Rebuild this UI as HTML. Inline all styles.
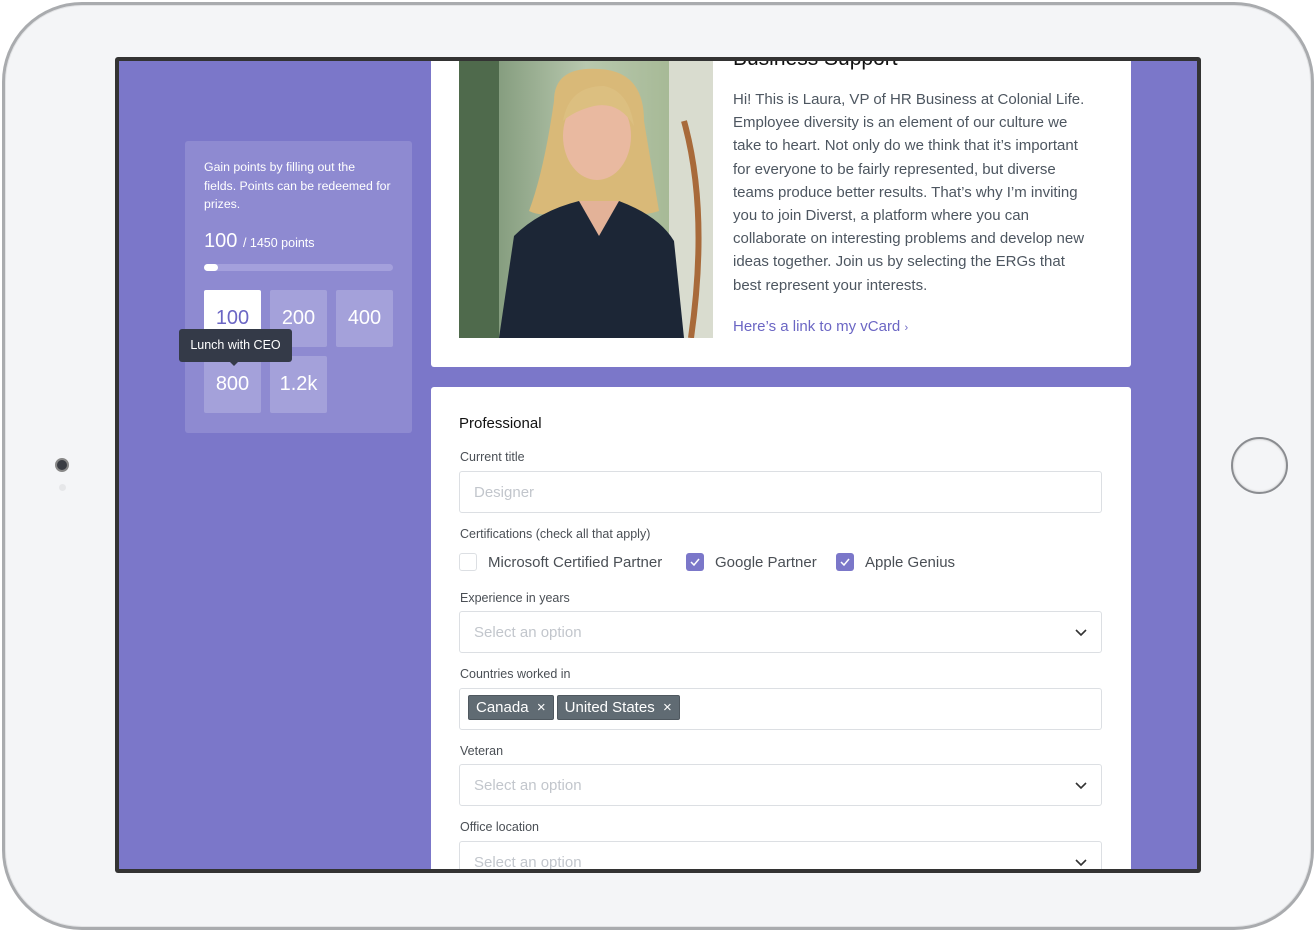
<!DOCTYPE html>
<html><head><meta charset="utf-8"><style>
*{box-sizing:border-box;margin:0;padding:0}
body{width:1316px;height:933px;background:#fff;position:relative;overflow:hidden;font-family:"Liberation Sans",Arial,sans-serif}
.dev{position:absolute;left:2px;top:2px;width:1312px;height:928px;border-radius:80px;background:#f4f5f7;border:3px solid #a9abae;box-shadow:inset 0 0 0 1px #e2e3e5}
.bezel{position:absolute;left:115px;top:57px;width:1086px;height:816px;background:#333;border-radius:3px}
.scr{position:absolute;left:119px;top:61px;width:1078px;height:808px;background:#7b77c9;overflow:hidden}
.a{position:absolute}
.card{position:absolute;background:#fff;border-radius:3px}
.lbl{position:absolute;font-size:12.5px;color:#4a4f55}
.inp{position:absolute;left:28px;width:643px;height:42px;border:1px solid #dcdfe3;border-radius:3px;font-size:15px;color:#c2c6cc;padding:12px 14px}
.chev{position:absolute;right:14px;top:14px}
.box{position:absolute;width:57px;height:57px;background:rgba(255,255,255,.2);border-radius:2px;color:#fff;font-size:20px;text-align:center;line-height:57px}
.tag{display:inline-block;background:#606b73;color:#fff;font-size:15px;padding:3px 7px;border:1px solid #4f585f;border-radius:2px;margin-right:3px}
.cb{position:absolute;width:18px;height:18px;border-radius:3px}
.cbt{position:absolute;font-size:15px;color:#4a4f55}
</style></head><body>
<div class="dev"></div>
<div class="a" style="left:55px;top:458px;width:14px;height:14px;border-radius:50%;background:#3a3d44;border:2px solid #888"></div>
<div class="a" style="left:59px;top:484px;width:7px;height:7px;border-radius:50%;background:#e6e7e9"></div>
<div class="a" style="left:1231px;top:437px;width:57px;height:57px;border-radius:50%;border:2px solid #8a8c90;box-shadow:inset 0 0 2px #bbb"></div>
<div class="bezel"></div>
<div class="scr">
  <div class="a" style="left:66px;top:80px;width:227px;height:292px;background:#8e8ad1;border-radius:3px"></div>
  <div class="a" style="left:85px;top:97px;width:192px;font-size:12.3px;line-height:18.5px;color:#fff">Gain points by filling out the<br>fields. Points can be redeemed for prizes.</div>
  <div class="a" style="left:85px;top:169px;color:#fff;font-size:20px">100 <span style="font-size:12.5px">/ 1450 points</span></div>
  <div class="a" style="left:85px;top:203px;width:189px;height:7px;border-radius:4px;background:#a4a0dc"></div>
  <div class="a" style="left:85px;top:203px;width:14px;height:7px;border-radius:4px;background:#fff"></div>
  <div class="box" style="left:85px;top:229px;background:#fff;color:#6b66c4">100</div>
  <div class="box" style="left:151px;top:229px">200</div>
  <div class="box" style="left:217px;top:229px">400</div>
  <div class="box" style="left:85px;top:295px">800</div>
  <div class="box" style="left:151px;top:295px">1.2k</div>
  <div class="a" style="left:60px;top:268px;width:113px;height:33px;background:#343a48;border-radius:3px;color:#fff;font-size:12.5px;line-height:33px;text-align:center">Lunch with CEO</div>
  <div class="a" style="left:111px;top:301px;width:0;height:0;border-left:4px solid transparent;border-right:4px solid transparent;border-top:4px solid #343a48"></div>

  <div class="card" style="left:312px;top:-20px;width:700px;height:326px">
    <svg class="a" style="left:28px;top:20px" width="254" height="277" viewBox="0 0 254 277">
      <defs><linearGradient id="bg" x1="0" x2="1"><stop offset="0" stop-color="#6f8a6a"/><stop offset=".5" stop-color="#b8c8ae"/><stop offset="1" stop-color="#9eb28a"/></linearGradient></defs>
      <rect width="254" height="277" fill="url(#bg)"/>
      <rect x="0" y="0" width="40" height="277" fill="#4f6a4c"/>
      <rect x="210" y="0" width="44" height="277" fill="#d9dccf"/>
      <path d="M225 60 Q250 150 232 277" stroke="#a86a3a" stroke-width="6" fill="none"/>
      <path d="M95 40 Q95 5 140 8 Q185 10 185 60 Q195 120 200 150 Q170 160 150 140 L120 140 Q90 160 70 150 Q85 110 95 40Z" fill="#d9b978"/>
      <ellipse cx="138" cy="75" rx="34" ry="44" fill="#e9b9a0"/>
      <path d="M104 60 Q110 25 145 25 Q170 30 175 65 Q160 40 135 45 Q115 50 104 60Z" fill="#dcbf80"/>
      <path d="M40 277 L55 175 Q80 150 120 140 L160 140 Q200 155 215 180 L225 277Z" fill="#1c2636"/>
      <path d="M120 140 L140 175 L160 140Z" fill="#e3b298"/>
    </svg>
    <div class="a" style="left:302px;top:6px;font-size:21px;color:#111">Business Support</div>
    <div class="a" style="left:302px;top:47px;width:364px;font-size:15px;line-height:23.2px;color:#4d5660">Hi! This is Laura, VP of HR Business at Colonial Life. Employee diversity is an element of our culture we take to heart. Not only do we think that it’s important for everyone to be fairly represented, but diverse teams produce better results. That’s why I’m inviting you to join Diverst, a platform where you can collaborate on interesting problems and develop new ideas together. Join us by selecting the ERGs that best represent your interests.</div>
    <div class="a" style="left:302px;top:277px;font-size:15px;color:#6b66c4">Here’s a link to my vCard <span style="font-size:11px">›</span></div>
  </div>

  <div class="card" style="left:312px;top:326px;width:700px;height:520px">
    <div class="a" style="left:28px;top:28px;font-size:15px;color:#111">Professional</div>
    <div class="lbl" style="left:29px;top:63px">Current title</div>
    <div class="inp" style="top:84px">Designer</div>
    <div class="lbl" style="left:29px;top:140px">Certifications (check all that apply)</div>
    <div class="cb" style="left:28px;top:166px;border:1px solid #dcdfe3"></div>
    <div class="cbt" style="left:57px;top:167px">Microsoft Certified Partner</div>
    <div class="cb" style="left:255px;top:166px;background:#7b77c9"><svg width="18" height="18"><path d="M5 9l3 3 5-6" stroke="#fff" stroke-width="1.5" fill="none"/></svg></div>
    <div class="cbt" style="left:284px;top:167px">Google Partner</div>
    <div class="cb" style="left:405px;top:166px;background:#7b77c9"><svg width="18" height="18"><path d="M5 9l3 3 5-6" stroke="#fff" stroke-width="1.5" fill="none"/></svg></div>
    <div class="cbt" style="left:434px;top:167px">Apple Genius</div>
    <div class="lbl" style="left:29px;top:204px">Experience in years</div>
    <div class="inp" style="top:224px">Select an option<svg class="chev" width="12" height="12"><path d="M1 4l5 5 5-5" stroke="#333" stroke-width="1.6" fill="none"/></svg></div>
    <div class="lbl" style="left:29px;top:280px">Countries worked in</div>
    <div class="inp" style="top:301px;padding:6px 8px"><span class="tag">Canada &nbsp;×</span><span class="tag">United States &nbsp;×</span></div>
    <div class="lbl" style="left:29px;top:357px">Veteran</div>
    <div class="inp" style="top:377px">Select an option<svg class="chev" width="12" height="12"><path d="M1 4l5 5 5-5" stroke="#333" stroke-width="1.6" fill="none"/></svg></div>
    <div class="lbl" style="left:29px;top:433px">Office location</div>
    <div class="inp" style="top:454px">Select an option<svg class="chev" width="12" height="12"><path d="M1 4l5 5 5-5" stroke="#333" stroke-width="1.6" fill="none"/></svg></div>
  </div>
</div>
</body></html>
